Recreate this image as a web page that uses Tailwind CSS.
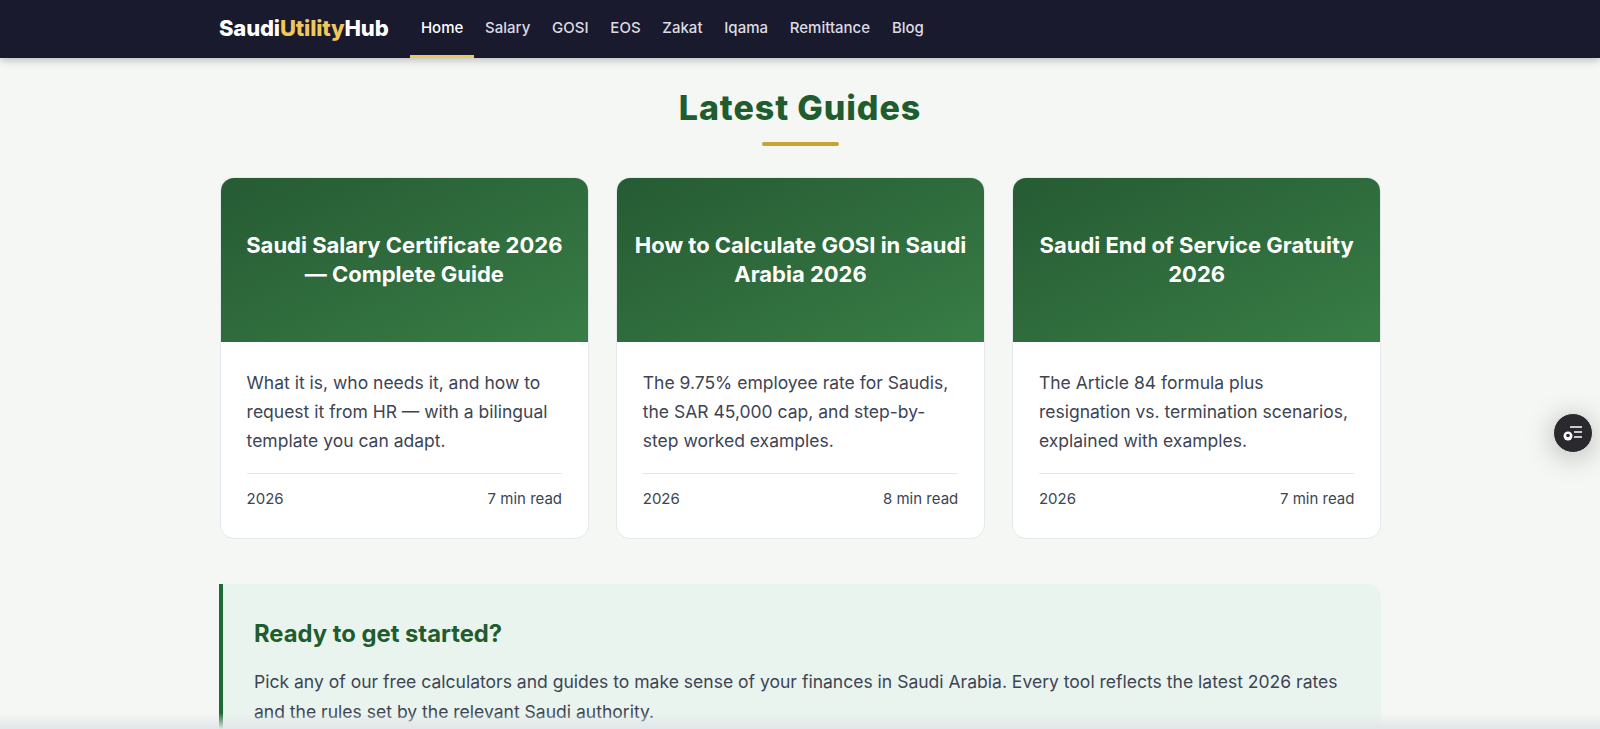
<!DOCTYPE html>
<html lang="en"><head><meta charset="utf-8"><title>Saudi Utility Hub</title>
<script src="https://cdn.jsdelivr.net/npm/@tailwindcss/browser@4"></script></head>
<body class="relative h-[729px] overflow-hidden bg-[#f4f7f4] font-['Inter',sans-serif] text-[#3d4454]">
<header class="h-[58px] bg-[#1a1a2e] shadow-[0_2px_8px_rgba(0,0,0,0.25)]">
  <div class="mx-auto flex h-full w-[1160px] items-stretch">
    <a class="mr-[21.5px] -ml-px flex items-center pb-[1px] text-[22px] font-extrabold tracking-[-0.15px] text-white">Saudi<span class="text-[#f0c75e]">Utility</span>Hub</a>
    <nav class="flex text-[15px] font-medium text-[#dcdce2]">
      <a class="flex items-center border-b-[3px] border-[#f0c75e] px-[10.9px] pt-[2px] text-white">Home</a>
      <a class="flex items-center border-b-[3px] border-transparent px-[10.9px] pt-[2px]">Salary</a>
      <a class="flex items-center border-b-[3px] border-transparent px-[10.9px] pt-[2px]">GOSI</a>
      <a class="flex items-center border-b-[3px] border-transparent px-[10.9px] pt-[2px]">EOS</a>
      <a class="flex items-center border-b-[3px] border-transparent px-[10.9px] pt-[2px]">Zakat</a>
      <a class="flex items-center border-b-[3px] border-transparent px-[10.9px] pt-[2px]">Iqama</a>
      <a class="flex items-center border-b-[3px] border-transparent px-[10.9px] pt-[2px]">Remittance</a>
      <a class="flex items-center border-b-[3px] border-transparent px-[10.9px] pt-[2px]">Blog</a>
    </nav>
  </div>
</header>
<main class="mx-auto w-[1160px]">
  <h2 class="mt-[29px] text-center text-[34px] leading-[42px] font-extrabold tracking-[0.9px] text-[#1f5c2e]">Latest Guides</h2>
  <div class="mx-auto mt-[13px] h-1 w-[77px] rounded-sm bg-[#c8a233]"></div>
  <div class="mt-[31px] grid w-[1161px] grid-cols-3 gap-[27.5px]">
    <article class="overflow-hidden rounded-[14px] border border-[#e5e9ee] bg-white">
      <div class="flex h-[164px] items-center justify-center bg-gradient-to-br from-[#265b33] to-[#387d46] px-[16px] text-center text-[22px] leading-[28.6px] font-bold text-white">Saudi Salary Certificate 2026 — Complete Guide</div>
      <div class="px-[25.6px] pt-[27px] pb-[29px]">
        <p class="h-[87px] text-[17.5px] leading-[28.8px]">What it is, who needs it, and how to request it from HR — with a bilingual template you can adapt.</p>
        <div class="mt-[17px] flex justify-between border-t border-[#e5e9ee] pt-[15px] text-[15px] leading-[20px]"><span>2026</span><span>7 min read</span></div>
      </div>
    </article>
    <article class="overflow-hidden rounded-[14px] border border-[#e5e9ee] bg-white">
      <div class="flex h-[164px] items-center justify-center bg-gradient-to-br from-[#265b33] to-[#387d46] px-[16px] text-center text-[22px] leading-[28.6px] font-bold text-white">How to Calculate GOSI in Saudi Arabia 2026</div>
      <div class="px-[25.6px] pt-[27px] pb-[29px]">
        <p class="h-[87px] text-[17.5px] leading-[28.8px]">The 9.75% employee rate for Saudis, the SAR 45,000 cap, and step-by-step worked examples.</p>
        <div class="mt-[17px] flex justify-between border-t border-[#e5e9ee] pt-[15px] text-[15px] leading-[20px]"><span>2026</span><span>8 min read</span></div>
      </div>
    </article>
    <article class="overflow-hidden rounded-[14px] border border-[#e5e9ee] bg-white">
      <div class="flex h-[164px] items-center justify-center bg-gradient-to-br from-[#265b33] to-[#387d46] px-[16px] text-center text-[22px] leading-[28.6px] font-bold text-white">Saudi End of Service Gratuity 2026</div>
      <div class="px-[25.6px] pt-[27px] pb-[29px]">
        <p class="h-[87px] text-[17.5px] leading-[28.8px]">The Article 84 formula plus resignation vs. termination scenarios, explained with examples.</p>
        <div class="mt-[17px] flex justify-between border-t border-[#e5e9ee] pt-[15px] text-[15px] leading-[20px]"><span>2026</span><span>7 min read</span></div>
      </div>
    </article>
  </div>
  <section class="-mx-px mt-[45px] rounded-r-[14px] border-l-[4px] border-[#1f6b36] bg-[#eaf4ee] pt-[33px] pr-[30px] pb-[32px] pl-[31px]">
    <h3 class="text-[23.8px] leading-[34px] font-bold text-[#1f5c2e]">Ready to get started?</h3>
    <p class="mt-[16px] text-[17.55px] leading-[30.2px]">Pick any of our free calculators and guides to make sense of your finances in Saudi Arabia. Every tool reflects the latest 2026 rates and the rules set by the relevant Saudi authority.</p>
  </section>
</main>
<button class="absolute top-[413px] right-[7px] flex h-[40px] w-[40px] items-center justify-center rounded-full border border-[#e8e8e8] bg-[#2a2a2e] shadow-[0_4px_28px_rgba(0,0,0,0.25)]" aria-label="Menu">
  <svg width="22" height="18" viewBox="0 0 22 18" fill="none"><path d="M8 3h12M12 8h8M12 13h8" stroke="#fff" stroke-width="1.5"/><circle cx="6" cy="12" r="4.5" fill="#fff"/><circle cx="6" cy="11.5" r="1.8" fill="#2a2a2e"/></svg>
</button>
<div class="absolute inset-x-0 bottom-0 h-[16px] bg-gradient-to-b from-transparent to-[#e2e6ea]"></div>
</body></html>
